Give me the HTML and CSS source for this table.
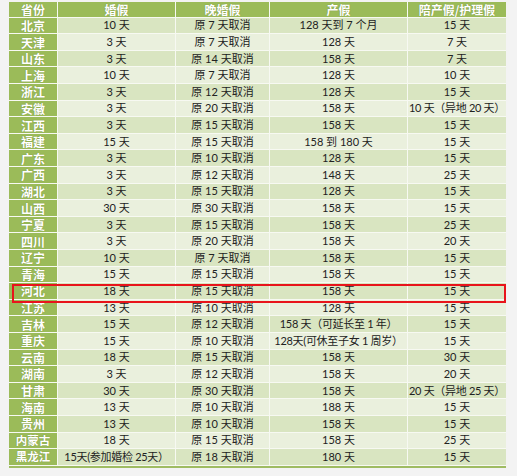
FILE: index.html
```html
<!DOCTYPE html>
<html lang="zh-CN">
<head>
<meta charset="utf-8">
<title>各省婚假产假</title>
<link rel="stylesheet" href="styles.css">
</head>
<body>
<div class="sheet">
  <div class="row head"><div>省份</div><div>婚假</div><div>晚婚假</div><div>产假</div><div>陪产假/护理假</div></div>
  <div class="row a"><div class="p">北京</div><div>10 天</div><div>原 7 天取消</div><div>128 天到 7 个月</div><div>15 天</div></div>
  <div class="row b"><div class="p">天津</div><div>3 天</div><div>原 7 天取消</div><div>128 天</div><div>7 天</div></div>
  <div class="row a"><div class="p">山东</div><div>3 天</div><div>原 14 天取消</div><div>158 天</div><div>7 天</div></div>
  <div class="row b"><div class="p">上海</div><div>10 天</div><div>原 7 天取消</div><div>128 天</div><div>10 天</div></div>
  <div class="row a"><div class="p">浙江</div><div>3 天</div><div>原 12 天取消</div><div>128 天</div><div>15 天</div></div>
  <div class="row b"><div class="p">安徽</div><div>3 天</div><div>原 20 天取消</div><div>158 天</div><div class="tight">10 天（异地 20 天）</div></div>
  <div class="row a"><div class="p">江西</div><div>3 天</div><div>原 15 天取消</div><div>158 天</div><div>15 天</div></div>
  <div class="row b"><div class="p">福建</div><div>15 天</div><div>原 15 天取消</div><div>158 到 180 天</div><div>15 天</div></div>
  <div class="row a"><div class="p">广东</div><div>3 天</div><div>原 10 天取消</div><div>128 天</div><div>15 天</div></div>
  <div class="row b"><div class="p">广西</div><div>3 天</div><div>原 12 天取消</div><div>148 天</div><div>25 天</div></div>
  <div class="row a"><div class="p">湖北</div><div>3 天</div><div>原 15 天取消</div><div>128 天</div><div>15 天</div></div>
  <div class="row b"><div class="p">山西</div><div>30 天</div><div>原 30 天取消</div><div>158 天</div><div>15 天</div></div>
  <div class="row a"><div class="p">宁夏</div><div>3 天</div><div>原 15 天取消</div><div>158 天</div><div>25 天</div></div>
  <div class="row b"><div class="p">四川</div><div>3 天</div><div>原 20 天取消</div><div>158 天</div><div>20 天</div></div>
  <div class="row a"><div class="p">辽宁</div><div>10 天</div><div>原 7 天取消</div><div>158 天</div><div>15 天</div></div>
  <div class="row b"><div class="p">青海</div><div>15 天</div><div>原 15 天取消</div><div>158 天</div><div>15 天</div></div>
  <div class="row a"><div class="p">河北</div><div>18 天</div><div>原 15 天取消</div><div>158 天</div><div>15 天</div></div>
  <div class="row b"><div class="p">江苏</div><div>13 天</div><div>原 10 天取消</div><div>128 天</div><div>15 天</div></div>
  <div class="row a"><div class="p">吉林</div><div>15 天</div><div>原 12 天取消</div><div class="tight">158 天（可延长至 1 年）</div><div>15 天</div></div>
  <div class="row b"><div class="p">重庆</div><div>15 天</div><div>原 10 天取消</div><div class="tight">128天(可休至子女 1 周岁）</div><div>15 天</div></div>
  <div class="row a"><div class="p">云南</div><div>18 天</div><div>原 15 天取消</div><div>158 天</div><div>30 天</div></div>
  <div class="row b"><div class="p">湖南</div><div>3 天</div><div>原 12 天取消</div><div>158 天</div><div>20 天</div></div>
  <div class="row a"><div class="p">甘肃</div><div>30 天</div><div>原 30 天取消</div><div>158 天</div><div class="tight">20 天（异地 25 天）</div></div>
  <div class="row b"><div class="p">海南</div><div>13 天</div><div>原 10 天取消</div><div>188 天</div><div>15 天</div></div>
  <div class="row a"><div class="p">贵州</div><div>13 天</div><div>原 10 天取消</div><div>158 天</div><div>15 天</div></div>
  <div class="row b"><div class="p p3">内蒙古</div><div>18 天</div><div>原 15 天取消</div><div>158 天</div><div>25 天</div></div>
  <div class="row a"><div class="p p3">黑龙江</div><div class="tight">15天(参加婚检 25天）</div><div>原 18 天取消</div><div>180 天</div><div>15 天</div></div>
  <div class="bottom"></div>
  <div class="mark"></div>
</div>
</body>
</html>
```

FILE: styles.css
```css
html, body {
  margin: 0;
  padding: 0;
  background: #f3f3f3;
}
body {
  padding: 2px 0 0 9px;
  font-family: Lato, "Noto Sans CJK SC", sans-serif;
}
.sheet {
  position: relative;
  width: 497px;
  display: flex;
  flex-direction: column;
  gap: 1px;
  background: #f7f9f2;
}
.row {
  display: grid;
  grid-template-columns: 48px 117px 93px 137px 98px;
  column-gap: 1px;
  height: 15.6px;
}
.row > div {
  display: flex;
  align-items: center;
  justify-content: center;
  font-size: 11px;
  line-height: 14px;
  color: #222;
  white-space: nowrap;
}
.row > div.tight {
  letter-spacing: -0.3px;
}
.row.head {
  height: 14.7px;
}
.row.head > div {
  background: #9bbb59;
  color: #fff;
  font-weight: bold;
  font-size: 12px;
  line-height: 13px;
  font-family: "Noto Sans CJK SC", sans-serif;
  text-shadow: 0 0 1px rgba(80, 100, 30, 0.6);
}
.row.a > div { background: #d9e5c1; }
.row.b > div { background: #eaf0dd; }
.row > div.p {
  background: #9bbb59;
  color: #fff;
  font-weight: bold;
  font-size: 12px;
  line-height: 13px;
  font-family: "Noto Sans CJK SC", sans-serif;
  text-shadow: 0 0 1px rgba(80, 100, 30, 0.6);
}
.row > div.p3 {
  font-size: 11.5px;
}
.bottom {
  height: 2.5px;
  background: #9fbc62;
}
.mark {
  position: absolute;
  left: 3px;
  top: 282px;
  width: 490px;
  height: 15px;
  border: 2px solid #e8141b;
}
```
